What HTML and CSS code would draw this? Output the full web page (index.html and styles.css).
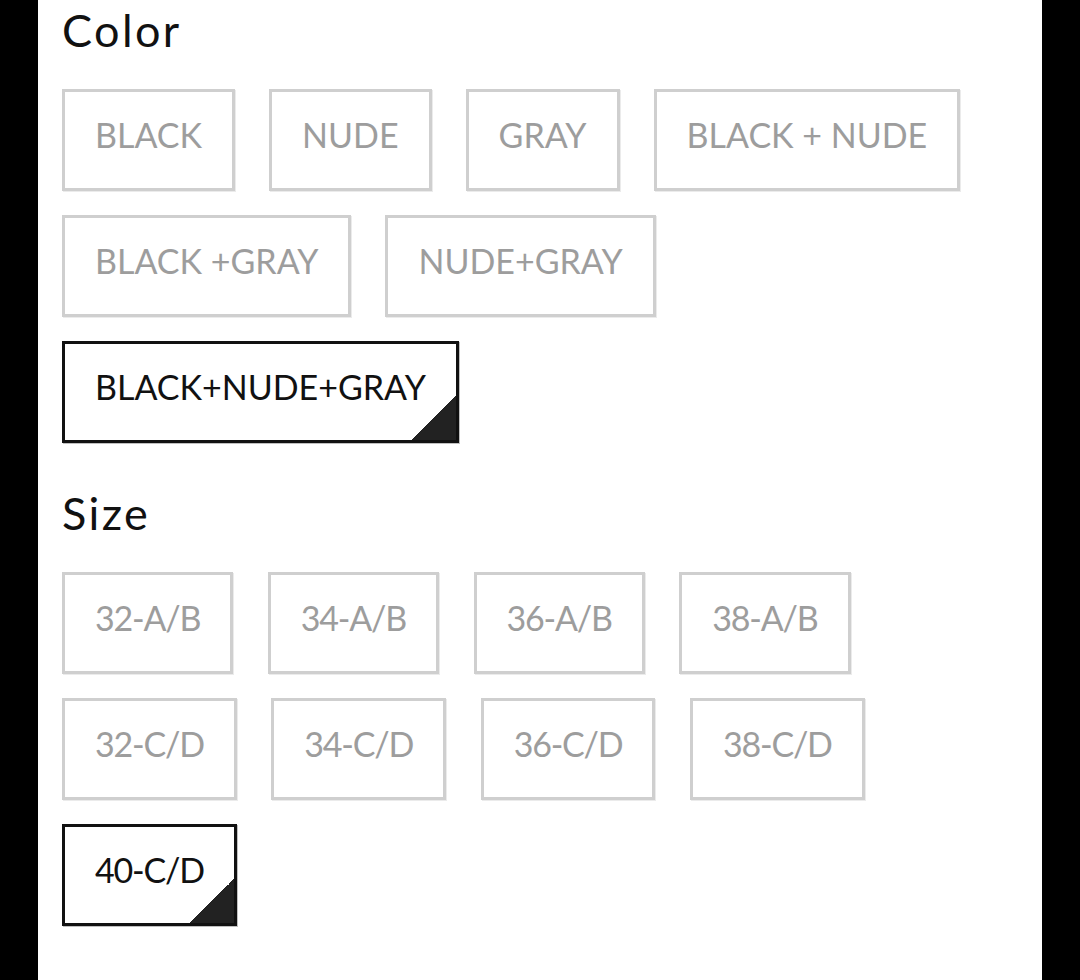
FILE: index.html
```html
<!DOCTYPE html>
<html lang="en">
<head>
<meta charset="utf-8">
<title>Variant picker</title>
<link rel="stylesheet" href="styles.css">
</head>
<body>
<main class="page">
  <section class="group">
    <h2 class="group-title">Color</h2>
    <div class="options">
      <button class="opt">BLACK</button>
      <button class="opt">NUDE</button>
      <button class="opt">GRAY</button>
      <button class="opt">BLACK + NUDE</button>
      <button class="opt">BLACK +GRAY</button>
      <button class="opt">NUDE+GRAY</button>
      <button class="opt opt--selected">BLACK+NUDE+GRAY<span class="corner"></span></button>
    </div>
  </section>
  <section class="group group--size">
    <h2 class="group-title">Size</h2>
    <div class="options options--size">
      <button class="opt">32-A/B</button>
      <button class="opt">34-A/B</button>
      <button class="opt">36-A/B</button>
      <button class="opt">38-A/B</button>
      <button class="opt">32-C/D</button>
      <button class="opt">34-C/D</button>
      <button class="opt">36-C/D</button>
      <button class="opt">38-C/D</button>
      <button class="opt opt--selected">40-C/D<span class="corner"></span></button>
    </div>
  </section>
</main>
</body>
</html>
```

FILE: styles.css
```css
html, body {
  margin: 0;
  padding: 0;
  background: #000;
}

.page {
  width: 1004px;
  min-height: 980px;
  margin: 0 auto;
  background: #fff;
  box-sizing: border-box;
  padding: 8px 24px 0 24px;
  font-family: "Lato", "Liberation Sans", sans-serif;
}

.group-title {
  margin: 0 0 36px 0;
  font-size: 45px;
  line-height: 45px;
  font-weight: 400;
  color: #111;
  letter-spacing: 2.4px;
}

.group--size {
  margin-top: 48px;
}

.options {
  display: flex;
  flex-wrap: wrap;
  column-gap: 34px;
  row-gap: 24px;
  max-width: 956px;
}

.opt {
  position: relative;
  box-sizing: border-box;
  height: 102px;
  padding: 0 30px 10px 30px;
  border: 3px solid #cfcfcf;
  background: #fff;
  box-shadow: 1px 1px 0 rgba(0, 0, 0, 0.08);
  font-family: inherit;
  font-size: 34px;
  line-height: 86px;
  color: #9d9d9d;
  letter-spacing: 0;
  cursor: pointer;
}

.options--size {
  column-gap: 34.5px;
}

.options--size .opt {
  letter-spacing: -1.2px;
}

.opt--selected {
  border-color: #111;
  color: #111;
  box-shadow: 1px 1px 0 rgba(0, 0, 0, 0.25);
}

.corner {
  position: absolute;
  right: 0;
  bottom: 0;
  width: 44px;
  height: 44px;
  background: linear-gradient(to bottom right, transparent 50%, #222 50%);
}
```
